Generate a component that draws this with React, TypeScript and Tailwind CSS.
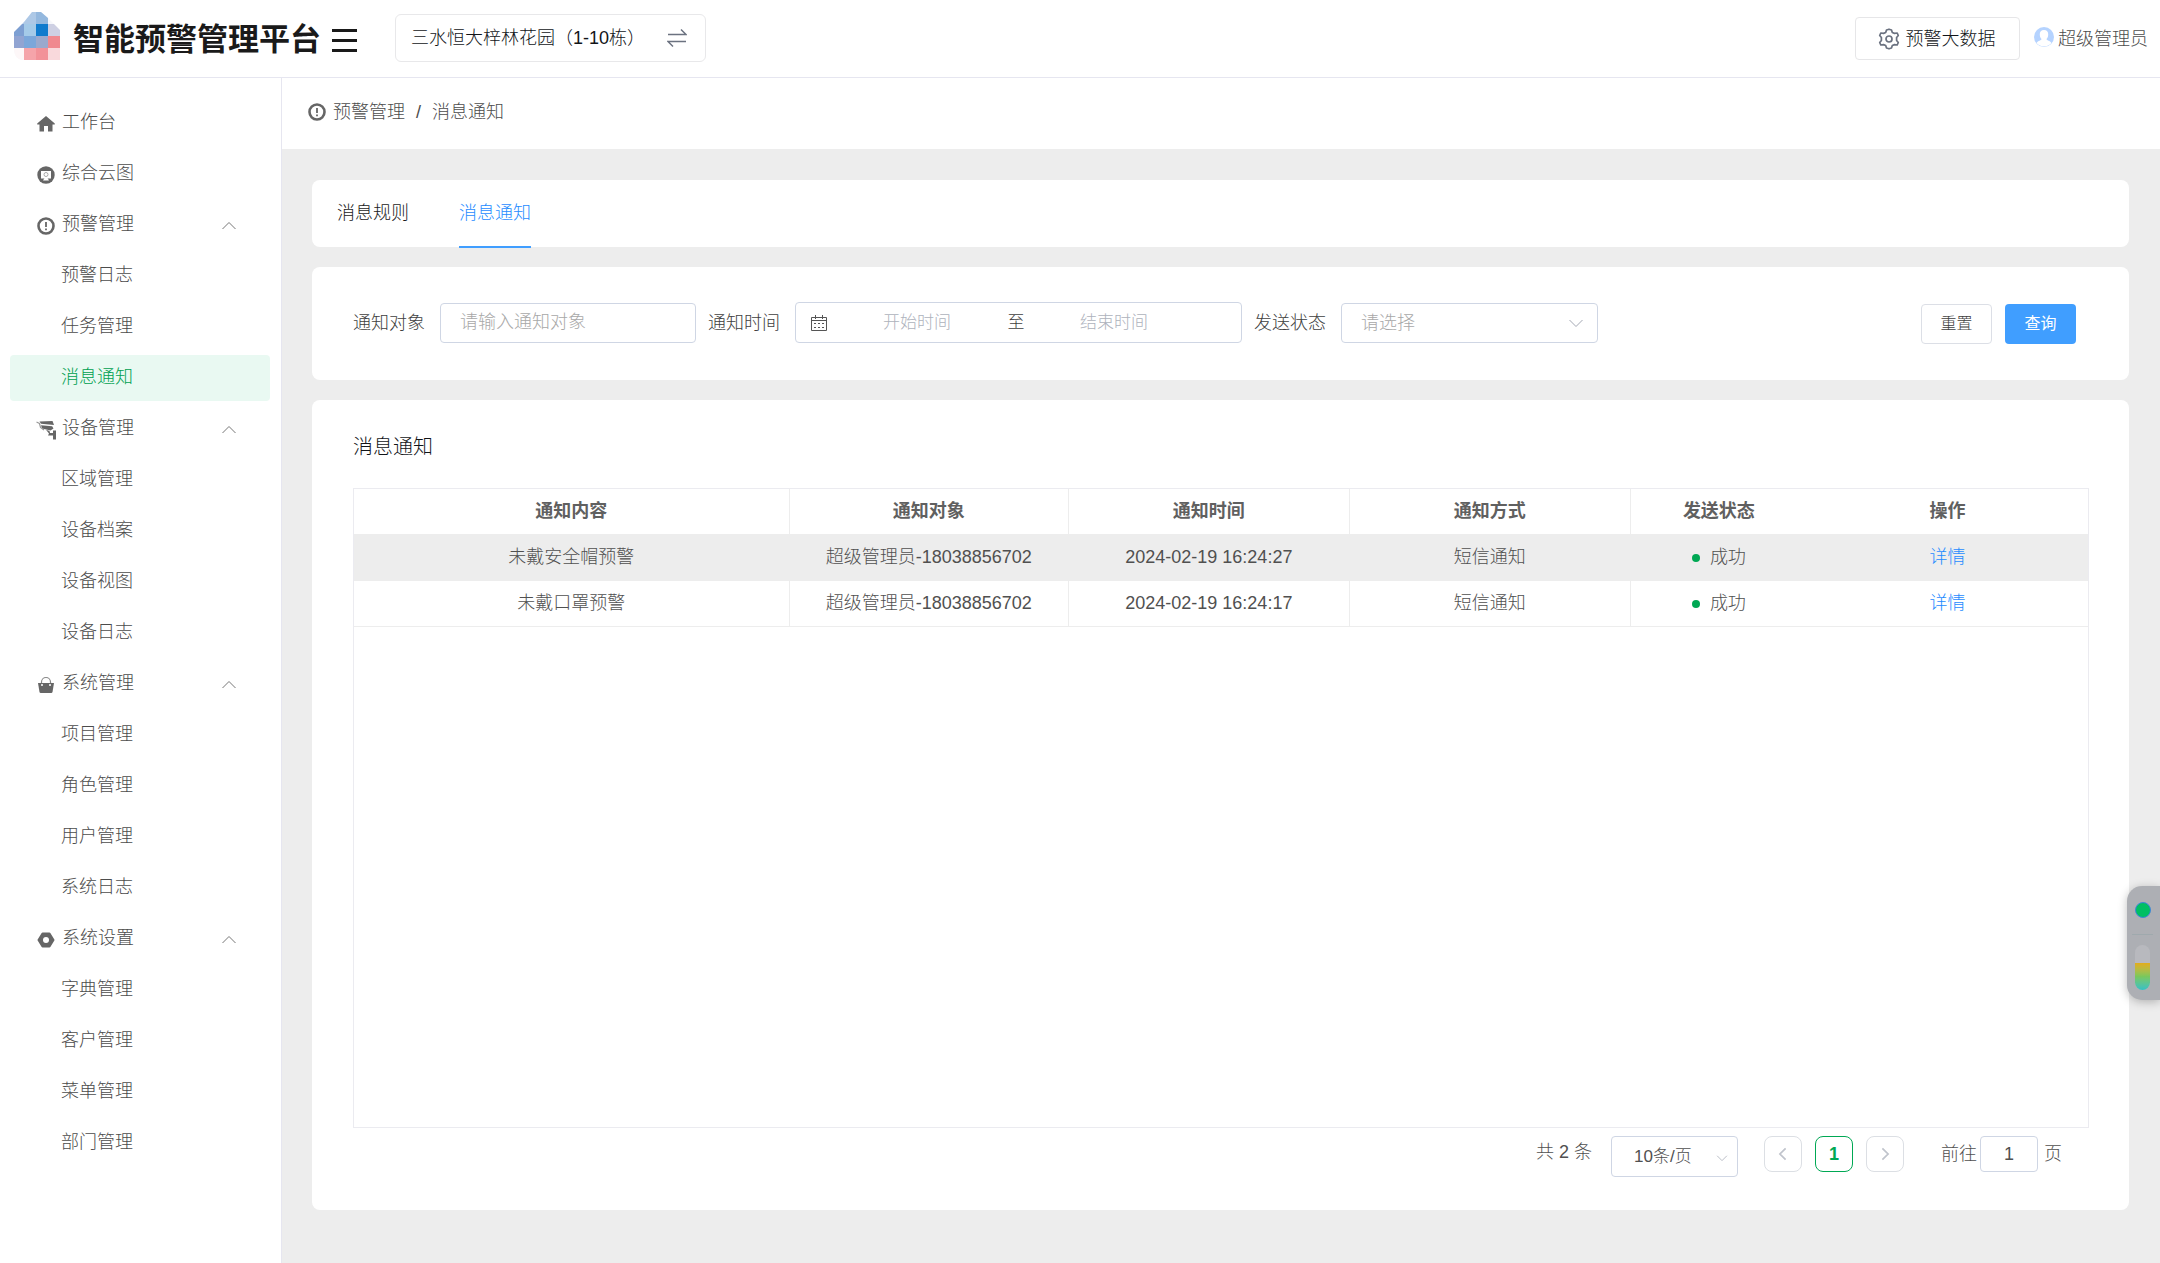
import type { ReactNode } from "react"
import { useState } from "react"

interface MenuItem {
  title: string
  icon: ReactNode
  children?: string[]
}

interface NoticeRow {
  id: number
  content: string
  target: string
  time: string
  method: string
  status: string
}

const HomeIcon = () => (
  <svg viewBox="0 0 18 18" className="size-[18px]" fill="#666">
    <path d="M9 1 17.800 8.500V9.500H15.500V16.500H11V11H7V16.500H2.500V9.500H.2V8.500Z" />
  </svg>
)

const CloudMapIcon = () => (
  <svg viewBox="0 0 18 18" className="size-[18px]">
    <circle cx="9" cy="9" r="8.700" fill="#666" />
    <path d="M4 5h10v7.500H4z" fill="#fff" />
    <path d="M7.500 12h3l1.500 2.500H6z" fill="#fff" />
    <circle cx="9" cy="8.500" r="2" fill="none" stroke="#aaa" strokeWidth="1" />
  </svg>
)

const WarnIcon = () => (
  <svg viewBox="0 0 18 18" className="size-[18px]" fill="none" stroke="#666">
    <circle cx="9" cy="9" r="7.500" strokeWidth="2.600" />
    <path d="M9 5v5M9 11.500v1.700" strokeWidth="1.800" />
  </svg>
)

const CameraIcon = () => (
  <svg viewBox="0 0 20 20" className="size-5" fill="#666">
    <path d="M3.500 1.500 16.500 1 18 5 5 3.800Z" />
    <path d="M5 5.200 16.200 6.300 17.500 8.500 14.500 10.500 6 8.500Z" />
    <path d="M10 9.800 13.500 11 14 13H17V10.500H20V19.500H17V15.500H12L13 13.500Z" />
    <path d="M.5 2 3.500 3.500 4.500 7.500 8 10" fill="none" stroke="#999" strokeWidth="1.200" />
  </svg>
)

const BagIcon = () => (
  <svg viewBox="0 0 18 18" className="size-[18px]">
    <path d="M4.500 8V6a4.500 4.500 0 0 1 9 0v2" fill="none" stroke="#888" strokeWidth="1.200" />
    <path d="M1 7h16l-1.500 9q-.2 1-1.200 1H3.700q-1 0-1.200-1Z" fill="#666" />
    <circle cx="5" cy="9" r="1" fill="#fff" />
    <circle cx="13" cy="9" r="1" fill="#fff" />
  </svg>
)

const NutIcon = () => (
  <svg viewBox="0 0 18 18" className="size-[18px]">
    <path
      d="M5.500 2.500h7L16.500 9l-4 6.500h-7L1.500 9Z"
      fill="#666"
      stroke="#666"
      strokeWidth="2"
      strokeLinejoin="round"
    />
    <circle cx="9" cy="9" r="3" fill="#fff" />
  </svg>
)

const Chevron = ({ className }: { className: string }) => (
  <svg viewBox="0 0 16 16" className={className} fill="none" stroke="currentColor" aria-hidden="true">
    <path d="M1.500 5 8 11.500 14.500 5" />
  </svg>
)

const Logo = () => (
  <svg viewBox="0 0 46 48" className="mb-[5px] h-12 w-[46px] shrink-0" aria-hidden="true">
    <clipPath id="logo-shape">
      <path d="M18 0h9l7 6 12 12v30H10Q0 48 0 36V20l10-10Z" />
    </clipPath>
    <g clipPath="url(#logo-shape)" shapeRendering="crispEdges">
      <path fill="#f6f7fb" d="M0 0h46v48H0z" />
      <path fill="#adc8e6" d="M6 0h16v12H6z" />
      <path fill="#94b8de" d="M22 0h12v12H22z" />
      <path fill="#7d9fd2" d="M0 12h10v12H0z" />
      <path fill="#a4cae8" d="M10 12h12v12H10z" />
      <path fill="#107bcd" d="M22 12h12v12H22z" />
      <path fill="#ced0e3" d="M34 12h12v12H34z" />
      <path fill="#91a4d2" d="M0 24h10v12H0z" />
      <path fill="#7ba7da" d="M10 24h12v12H10z" />
      <path fill="#9aa9cd" d="M22 24h12v12H22z" />
      <path fill="#f0898f" d="M34 24h12v12H34z" />
      <path fill="#fdf7f8" d="M0 36h10v12H0z" />
      <path fill="#f5a4aa" d="M10 36h12v12H10z" />
      <path fill="#f29299" d="M22 36h12v12H22z" />
      <path fill="#f9d9dc" d="M34 36h12v12H34z" />
    </g>
  </svg>
)

const menu: MenuItem[] = [
  { title: "工作台", icon: <HomeIcon /> },
  { title: "综合云图", icon: <CloudMapIcon /> },
  { title: "预警管理", icon: <WarnIcon />, children: ["预警日志", "任务管理", "消息通知"] },
  { title: "设备管理", icon: <CameraIcon />, children: ["区域管理", "设备档案", "设备视图", "设备日志"] },
  { title: "系统管理", icon: <BagIcon />, children: ["项目管理", "角色管理", "用户管理", "系统日志"] },
  { title: "系统设置", icon: <NutIcon />, children: ["字典管理", "客户管理", "菜单管理", "部门管理"] },
]

const rows: NoticeRow[] = [
  {
    id: 1,
    content: "未戴安全帽预警",
    target: "超级管理员-18038856702",
    time: "2024-02-19 16:24:27",
    method: "短信通知",
    status: "成功",
  },
  {
    id: 2,
    content: "未戴口罩预警",
    target: "超级管理员-18038856702",
    time: "2024-02-19 16:24:17",
    method: "短信通知",
    status: "成功",
  },
]

const Header = () => (
  <header className="flex h-[78px] shrink-0 items-center border-b border-[#e6e6f0] pr-3 pl-[14px]">
    <Logo />
    <h1 className="ml-[13px] pt-[2px] text-[31px] leading-[44px] font-bold whitespace-nowrap text-[#1a1a1a]">
      智能预警管理平台
    </h1>
    <button type="button" aria-label="折叠菜单" className="ml-[11px] flex w-[25px] flex-col gap-[7px] pt-1">
      <span className="h-[3px] bg-[#1a1a1a]" />
      <span className="h-[3px] bg-[#1a1a1a]" />
      <span className="h-[3px] bg-[#1a1a1a]" />
    </button>
    <button
      type="button"
      className="mb-[2px] ml-[38px] flex h-12 w-[311px] items-center justify-between rounded-md border border-[#e8e8ea] pr-[18px] pl-[15px] text-[#111418]"
    >
      三水恒大梓林花园（1-10栋）
      <svg viewBox="0 0 20 20" className="size-5" fill="none" stroke="#6b7280" strokeWidth="1.500" aria-hidden="true">
        <path d="M1 6.500h18L14 1.500M19 13.500H1l5 5" />
      </svg>
    </button>
    <button
      type="button"
      className="ml-auto flex h-[43px] w-[165px] items-center justify-center gap-[6px] rounded border border-[#e6e6e8] pr-[2px] text-[#111418]"
    >
      <svg
        viewBox="0 0 22 22"
        className="size-[22px]"
        fill="none"
        stroke="#6b7280"
        strokeWidth="1.700"
        strokeLinejoin="round"
        aria-hidden="true"
      >
        <path d="M11 1.200 13.500 2 14.300 4.500 16.500 5.400 19.200 5 20.300 7.500 18.600 9.500V12.500L20.300 14.500 19.200 17 16.500 16.600 14.300 17.500 13.500 20 11 20.800 8.500 20 7.700 17.500 5.500 16.600 2.800 17 1.700 14.500 3.400 12.500V9.500L1.700 7.500 2.800 5 5.500 5.400 7.700 4.500 8.500 2Z" />
        <circle cx="11" cy="11" r="3" />
      </svg>
      预警大数据
    </button>
    <a href="#user" className="ml-[14px] flex items-center gap-[4px] text-[#4c4c4c]">
      <svg viewBox="0 0 20 20" className="mb-1 size-5" aria-hidden="true">
        <circle cx="10" cy="10" r="10" fill="#b5d3ff" />
        <path
          d="M10 3c3 0 4.300 2 4.200 4.500 0 2-.8 3.500-1.700 4.500 0 1.500 3.500 1.500 5 4A10 10 0 0 1 2.500 16c1.500-2.500 5-2.500 5-4-.9-1-1.700-2.500-1.700-4.500C5.700 5 7 3 10 3Z"
          fill="#fff"
        />
      </svg>
      超级管理员
    </a>
  </header>
)

const Sidebar = () => (
  <nav className="flex w-[282px] shrink-0 flex-col gap-[5px] border-r border-[#e6e6f0] pt-[22px] pr-[11px] pl-[10px] text-[#4c4c4c]">
    {menu.map((item) => (
      <div key={item.title} className="flex flex-col gap-[5px]">
        <button type="button" className="flex h-[46px] items-center pr-[33px] pb-[2px] pl-[25px]">
          <span className="mt-[3px] flex w-[22px] justify-center">{item.icon}</span>
          <span className="ml-[5px]">{item.title}</span>
          {item.children && <Chevron className="mt-[3px] ml-auto size-4 rotate-180 text-[#777]" />}
        </button>
        {item.children?.map((child) => (
          <a
            key={child}
            href={`#${child}`}
            className={
              child === "消息通知"
                ? "flex h-[46px] items-center rounded bg-[#e9f9f2] pb-[2px] pl-[51px] text-[#00a050]"
                : "flex h-[46px] items-center rounded pb-[2px] pl-[51px]"
            }
          >
            {child}
          </a>
        ))}
      </div>
    ))}
  </nav>
)

const FilterCard = () => (
  <form className="flex h-[113px] shrink-0 items-center rounded-lg bg-white pr-[53px] pb-[2px] pl-[41px] text-[#404040]">
    <label htmlFor="target">通知对象</label>
    <input
      id="target"
      placeholder="请输入通知对象"
      className="ml-[15px] h-10 w-64 rounded border border-[#cfd6e4] px-[19px] placeholder:text-[#a8a8a8]"
    />
    <label htmlFor="start" className="ml-3">
      通知时间
    </label>
    <div className="ml-[15px] flex h-[41px] w-[447px] items-center rounded border border-[#cfd6e4] pl-[15px] text-[17px]">
      <svg viewBox="0 0 16 16" className="size-4" fill="none" stroke="#555" aria-hidden="true">
        <path d="M.5 2.500h15v13H.5zM.5 5.500h15M4.500 0v4M11.500 0v4" />
        <path d="M3 8.500h10M3 12.500h10" strokeDasharray="2 2" />
      </svg>
      <input
        id="start"
        aria-label="开始时间"
        placeholder="开始时间"
        className="ml-3 w-[156px] text-center placeholder:text-[#aeb2bc]"
      />
      <span className="ml-[11px] w-5 text-center">至</span>
      <input aria-label="结束时间" placeholder="结束时间" className="ml-1 w-[168px] text-center placeholder:text-[#aeb2bc]" />
    </div>
    <label htmlFor="status" className="ml-3">
      发送状态
    </label>
    <div className="relative ml-[15px]">
      <select
        id="status"
        className="h-10 w-[257px] appearance-none rounded border border-[#cfd6e4] bg-white px-[19px] text-[#a8a8a8]"
      >
        <option>请选择</option>
      </select>
      <Chevron className="pointer-events-none absolute top-3 right-[14px] size-4 text-[#a4a8b4]" />
    </div>
    <div className="ml-auto flex gap-[13px] pt-[2px] text-base">
      <button type="reset" className="h-10 w-[71px] rounded border border-[#dcdfe6]">
        重置
      </button>
      <button type="button" className="h-10 w-[71px] rounded bg-[#409eff] font-normal text-white">
        查询
      </button>
    </div>
  </form>
)

const NoticeTable = () => (
  <div className="flex-1 border border-[#ebebf0]">
    <table className="w-full table-fixed text-center text-[#505050]">
      <colgroup>
        <col className="w-[25.100%]" />
        <col className="w-[16.100%]" />
        <col className="w-[16.200%]" />
        <col className="w-[16.200%]" />
        <col className="w-[10.200%]" />
        <col className="w-[16.200%]" />
      </colgroup>
      <thead>
        <tr className="h-[45px] border-b border-[#ededed] text-[#606060]">
          <th className="border-r border-[#ededed] font-bold">通知内容</th>
          <th className="border-r border-[#ededed] font-bold">通知对象</th>
          <th className="border-r border-[#ededed] font-bold">通知时间</th>
          <th className="border-r border-[#ededed] font-bold">通知方式</th>
          <th className="font-bold">发送状态</th>
          <th className="font-bold">操作</th>
        </tr>
      </thead>
      <tbody>
        {rows.map((row) => (
          <tr key={row.id} className="h-[46px] border-b border-[#ededed] odd:bg-[#ededed]">
            <td className="border-r border-[#ededed]">{row.content}</td>
            <td className="border-r border-[#ededed]">{row.target}</td>
            <td className="border-r border-[#ededed]">{row.time}</td>
            <td className="border-r border-[#ededed]">{row.method}</td>
            <td>
              <span className="mr-[10px] inline-block size-2 rounded-full bg-[#00a854] align-middle" />
              {row.status}
            </td>
            <td>
              <a href={`#notice-${row.id}`} className="text-[#1f8cff]">
                详情
              </a>
            </td>
          </tr>
        ))}
      </tbody>
    </table>
  </div>
)

const Pagination = () => (
  <div className="flex h-[82px] shrink-0 items-start justify-end pt-2 pr-[27px] text-[#505050]">
    <span className="leading-[33px]">共 2 条</span>
    <div className="relative ml-[19px]">
      <select
        aria-label="每页条数"
        className="h-[41px] w-[127px] appearance-none rounded border border-[#cfd6e4] bg-white pl-[22px] text-[17px]"
      >
        <option>10条/页</option>
      </select>
      <Chevron className="pointer-events-none absolute top-4 right-[10px] size-3 text-[#a4a8b4]" />
    </div>
    <button
      type="button"
      aria-label="上一页"
      className="ml-[26px] flex h-9 w-[38px] items-center justify-center rounded-lg border border-[#dcdfe4] text-[#c0c4cc]"
    >
      <Chevron className="size-[14px] rotate-90 stroke-2" />
    </button>
    <button type="button" className="ml-[13px] h-9 w-[38px] rounded-lg border border-[#00a854] font-bold text-[#00a854]">
      1
    </button>
    <button
      type="button"
      aria-label="下一页"
      className="ml-[13px] flex h-9 w-[38px] items-center justify-center rounded-lg border border-[#dcdfe4] text-[#c0c4cc]"
    >
      <Chevron className="size-[14px] -rotate-90 stroke-2" />
    </button>
    <label htmlFor="page" className="ml-[37px] leading-9">
      前往
    </label>
    <input
      id="page"
      defaultValue="1"
      className="ml-[3px] h-9 w-[58px] rounded border border-[#cfd6e4] text-center"
    />
    <span className="ml-[6px] leading-9">页</span>
  </div>
)

// Monitor that hangs on the right window edge
const MonitorWidget = () => (
  <div className="fixed top-[886px] right-0 flex h-[114px] w-[33px] flex-col items-center rounded-l-[15px] bg-[#adafb4] pt-4 pr-[2px] shadow-[0_2px_10px_rgba(0,0,0,0.250)]">
    <span className="size-4 rounded-full border border-[#3f86d8] bg-[#00bf63]" />
    <span className="mt-4 h-px w-[21px] bg-[#9fa9ad]" />
    <span className="mt-[10px] flex h-[45px] w-[15px] flex-col justify-end overflow-hidden rounded-full bg-[#b8b9be]">
      <span className="h-[27px] bg-linear-to-b from-[#e2ac18] via-[#79c85c] to-[#35c0c4]" />
    </span>
  </div>
)

const App = () => {
  const [tab, setTab] = useState("消息通知")

  return (
    <div className="flex min-h-screen flex-col bg-white font-['Liberation_Sans','Noto_Sans_CJK_SC',sans-serif] text-[18px] leading-6 font-light">
      <Header />
      <div className="flex flex-1">
        <Sidebar />
        <div className="flex min-w-0 flex-1 flex-col">
          <div className="flex h-[71px] shrink-0 items-center pb-[3px] pl-[26px] text-[#4c4c4c]">
            <WarnIcon />
            <a href="#warning" className="ml-[7px]">
              预警管理
            </a>
            <span className="mx-[11px]">/</span>
            <span>消息通知</span>
          </div>
          <main className="flex flex-1 flex-col gap-5 bg-[#ededed] pt-[31px] pr-[31px] pb-[53px] pl-[30px]">
            <div className="flex h-[67px] shrink-0 gap-[50px] rounded-lg bg-white pl-[25px]">
              {["消息规则", "消息通知"].map((name) => (
                <button
                  key={name}
                  type="button"
                  onClick={() => setTab(name)}
                  className={
                    name === tab
                      ? "h-[68px] border-b-2 border-[#409eff] text-[#1f8cff]"
                      : "h-[68px] border-b-2 border-transparent text-[#1a1a1a]"
                  }
                >
                  {name}
                </button>
              ))}
            </div>
            <FilterCard />
            <section className="flex flex-1 flex-col rounded-lg bg-white pr-10 pl-[41px]">
              <h2 className="flex h-[88px] items-center pt-[6px] text-xl text-[#111418]">消息通知</h2>
              <NoticeTable />
              <Pagination />
            </section>
          </main>
        </div>
      </div>
      <MonitorWidget />
    </div>
  )
}

export default App
